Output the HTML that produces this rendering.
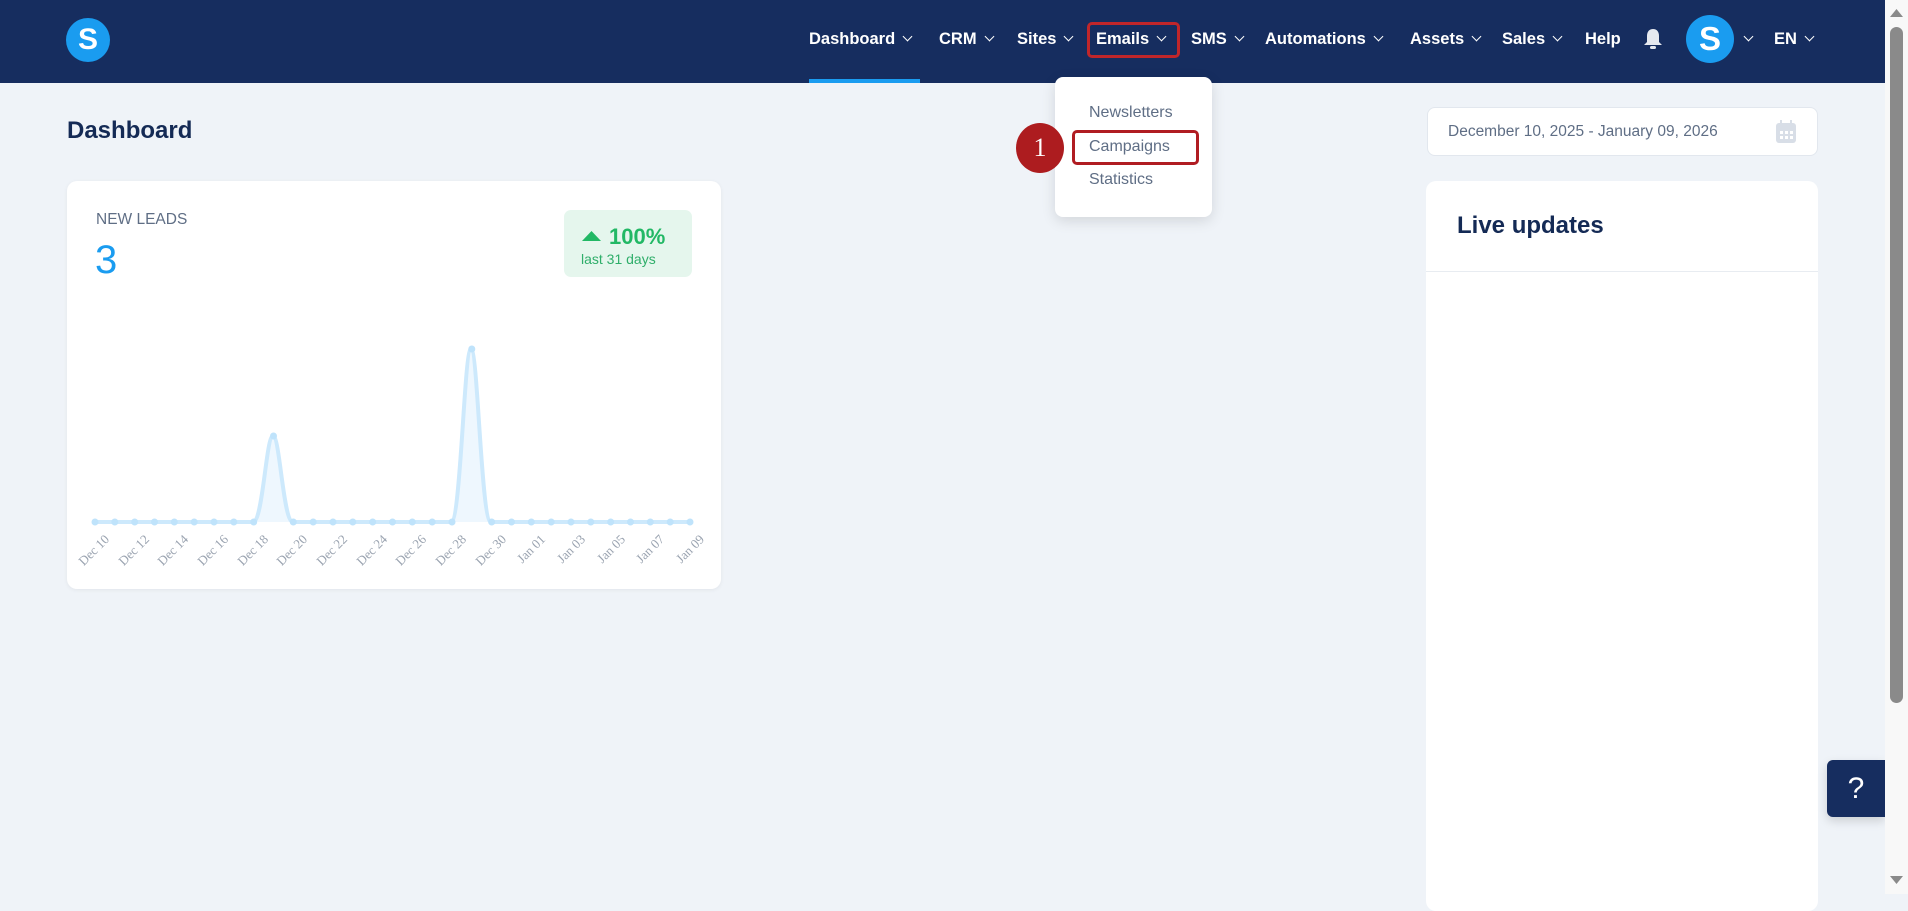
<!DOCTYPE html>
<html><head><meta charset="utf-8">
<style>
*{margin:0;padding:0;box-sizing:border-box}
body{width:1908px;height:894px;overflow:hidden;background:#eff3f8;font-family:"Liberation Sans",sans-serif;position:relative}
.hdr{position:absolute;left:0;top:0;width:1885px;height:83px;background:#162d5f}
.nav{position:absolute;top:30px;color:#fff;font-weight:bold;font-size:16.5px;white-space:nowrap}
.chev{display:inline-block;width:7px;height:7px;border-right:1.5px solid #fff;border-bottom:1.5px solid #fff;transform:rotate(45deg);margin-left:9px;position:relative;top:-4px}
.abs{position:absolute}
</style></head><body>
<div class="hdr"></div>
<div class="abs" style="left:66px;top:18px;width:44px;height:44px;border-radius:50%;background:#1a9cf0;color:#fff;font-weight:bold;font-size:30px;text-align:center;line-height:44px">S</div>
<div class="nav" style="left:809px">Dashboard<span class="chev"></span></div>
<div class="abs" style="left:809px;top:79px;width:111px;height:4px;background:#1a9cf0"></div>
<div class="nav" style="left:939px">CRM<span class="chev"></span></div>
<div class="nav" style="left:1017px">Sites<span class="chev"></span></div>
<div class="nav" style="left:1096px">Emails<span class="chev"></span></div>
<div class="abs" style="left:1087px;top:22px;width:93px;height:36px;border:3px solid #c0262a;border-radius:5px"></div>
<div class="nav" style="left:1191px">SMS<span class="chev"></span></div>
<div class="nav" style="left:1265px">Automations<span class="chev"></span></div>
<div class="nav" style="left:1410px">Assets<span class="chev"></span></div>
<div class="nav" style="left:1502px">Sales<span class="chev"></span></div>
<div class="nav" style="left:1585px">Help</div>
<svg class="abs" style="left:1642px;top:28px" width="22" height="23" viewBox="0 0 22 23"><path d="M11 1c-4 0-6 3-6 7v6l-3 3h18l-3-3V8c0-4-2-7-6-7z" fill="#e6e9ef"/><rect x="8" y="18" width="6" height="3" rx="1.5" fill="#e6e9ef"/></svg>
<div class="abs" style="left:1686px;top:15px;width:48px;height:48px;border-radius:50%;background:#1a9cf0;color:#fff;font-weight:bold;font-size:33px;text-align:center;line-height:48px">S</div>
<div class="nav" style="left:1745px"><span class="chev" style="margin-left:0"></span></div>
<div class="nav" style="left:1774px">EN<span class="chev"></span></div>

<div class="abs" style="left:67px;top:117px;font-size:24px;font-weight:bold;color:#142a55">Dashboard</div>

<div class="abs" style="left:67px;top:181px;width:654px;height:408px;background:#fff;border-radius:10px;box-shadow:0 1px 4px rgba(0,0,0,.06)"></div>
<div class="abs" style="left:96px;top:211px;font-size:15.5px;color:#5f6e85">NEW LEADS</div>
<div class="abs" style="left:95px;top:238px;font-size:40px;color:#1a9cf0">3</div>
<div class="abs" style="left:564px;top:210px;width:128px;height:67px;background:#e5f6ed;border-radius:7px"></div>
<svg class="abs" style="left:582px;top:231px" width="19" height="10"><polygon points="0,10 9.5,0 19,10" fill="#22b865"/></svg>
<div class="abs" style="left:609px;top:224px;font-size:22px;font-weight:bold;color:#22b865">100%</div>
<div class="abs" style="left:581px;top:251px;font-size:14px;color:#2fae6a">last 31 days</div>

<svg class="abs" style="left:67px;top:181px" width="654" height="408">
<g transform="translate(-67,-181)">
<path d="M95,522 L253,522 C263,522 266,436 273,436 C280,436 283,522 293,522 L451,522 C461,522 464,349 471,349 C478,349 481,522 491,522 L690,522 Z" fill="#eef7fe"/>
<path d="M95,522 L253,522 C263,522 266,436 273,436 C280,436 283,522 293,522 L451,522 C461,522 464,349 471,349 C478,349 481,522 491,522 L690,522" fill="none" stroke="#cde9fc" stroke-width="4"/>
<g fill="#bfe3fb">
<circle cx="95" cy="522" r="3.5"/><circle cx="114.8" cy="522" r="3.5"/><circle cx="134.7" cy="522" r="3.5"/><circle cx="154.5" cy="522" r="3.5"/><circle cx="174.3" cy="522" r="3.5"/><circle cx="194.2" cy="522" r="3.5"/><circle cx="214" cy="522" r="3.5"/><circle cx="233.8" cy="522" r="3.5"/><circle cx="253.7" cy="522" r="3.5"/><circle cx="273.5" cy="436" r="3.5"/><circle cx="293.3" cy="522" r="3.5"/><circle cx="313.2" cy="522" r="3.5"/><circle cx="333" cy="522" r="3.5"/><circle cx="352.8" cy="522" r="3.5"/><circle cx="372.7" cy="522" r="3.5"/><circle cx="392.5" cy="522" r="3.5"/><circle cx="412.3" cy="522" r="3.5"/><circle cx="432.2" cy="522" r="3.5"/><circle cx="452" cy="522" r="3.5"/><circle cx="471.8" cy="349" r="3.5"/><circle cx="491.7" cy="522" r="3.5"/><circle cx="511.5" cy="522" r="3.5"/><circle cx="531.3" cy="522" r="3.5"/><circle cx="551.2" cy="522" r="3.5"/><circle cx="571" cy="522" r="3.5"/><circle cx="590.8" cy="522" r="3.5"/><circle cx="610.7" cy="522" r="3.5"/><circle cx="630.5" cy="522" r="3.5"/><circle cx="650.3" cy="522" r="3.5"/><circle cx="670.2" cy="522" r="3.5"/><circle cx="690" cy="522" r="3.5"/>
</g>
<g font-family="Liberation Serif,serif" font-size="13" fill="#9aa3b0" text-anchor="end">
<text transform="translate(110,540) rotate(-45)">Dec 10</text>
<text transform="translate(150,540) rotate(-45)">Dec 12</text>
<text transform="translate(189,540) rotate(-45)">Dec 14</text>
<text transform="translate(229,540) rotate(-45)">Dec 16</text>
<text transform="translate(269,540) rotate(-45)">Dec 18</text>
<text transform="translate(308,540) rotate(-45)">Dec 20</text>
<text transform="translate(348,540) rotate(-45)">Dec 22</text>
<text transform="translate(388,540) rotate(-45)">Dec 24</text>
<text transform="translate(427,540) rotate(-45)">Dec 26</text>
<text transform="translate(467,540) rotate(-45)">Dec 28</text>
<text transform="translate(507,540) rotate(-45)">Dec 30</text>
<text transform="translate(546,540) rotate(-45)">Jan 01</text>
<text transform="translate(586,540) rotate(-45)">Jan 03</text>
<text transform="translate(626,540) rotate(-45)">Jan 05</text>
<text transform="translate(665,540) rotate(-45)">Jan 07</text>
<text transform="translate(705,540) rotate(-45)">Jan 09</text>
</g></g></svg>

<div class="abs" style="left:1427px;top:107px;width:391px;height:49px;background:#fff;border:1px solid #e2e7ee;border-radius:8px"></div>
<div class="abs" style="left:1448px;top:123px;font-size:15.5px;color:#5f6e85">December 10, 2025 - January 09, 2026</div>
<svg class="abs" style="left:1775px;top:120px" width="22" height="24"><rect x="1" y="3" width="20" height="20" rx="3" fill="#d8dee7"/><rect x="5" y="0" width="2" height="5" fill="#d8dee7"/><rect x="15" y="0" width="2" height="5" fill="#d8dee7"/><g fill="#fff"><rect x="5" y="11" width="3" height="3"/><rect x="10" y="11" width="3" height="3"/><rect x="15" y="11" width="3" height="3"/><rect x="5" y="16" width="3" height="3"/><rect x="10" y="16" width="3" height="3"/><rect x="15" y="16" width="3" height="3"/></g></svg>

<div class="abs" style="left:1426px;top:181px;width:392px;height:730px;background:#fff;border-radius:10px"></div>
<div class="abs" style="left:1426px;top:271px;width:392px;height:1px;background:#e8ecf1"></div>
<div class="abs" style="left:1457px;top:212px;font-size:24px;font-weight:bold;color:#142a55">Live updates</div>

<div class="abs" style="left:1055px;top:77px;width:157px;height:140px;background:#fff;border-radius:8px;box-shadow:0 4px 14px rgba(0,0,0,.12)"></div>
<div class="abs" style="left:1089px;top:104px;font-size:16px;color:#5f6e85">Newsletters</div>
<div class="abs" style="left:1089px;top:138px;font-size:16px;color:#5f6e85">Campaigns</div>
<div class="abs" style="left:1089px;top:171px;font-size:16px;color:#5f6e85">Statistics</div>
<div class="abs" style="left:1072px;top:130px;width:127px;height:35px;border:3px solid #b01c22;border-radius:5px"></div>
<div class="abs" style="left:1016px;top:123px;width:48px;height:50px;border-radius:50%;background:#ad1c1f;color:#fff;font-family:'Liberation Serif',serif;font-size:26px;text-align:center;line-height:50px">1</div>

<div class="abs" style="left:1827px;top:760px;width:58px;height:57px;background:#162d5f;border-radius:6px 0 0 6px;color:#fff;font-size:30px;text-align:center;line-height:57px;box-shadow:0 4px 10px rgba(0,0,0,.15)">?</div>

<div class="abs" style="left:1885px;top:0;width:23px;height:894px;background:#f8f8f8"></div>
<div class="abs" style="left:1890px;top:27px;width:13px;height:676px;background:#8a8a8a;border-radius:7px"></div>
<svg class="abs" style="left:1890px;top:9px" width="13" height="8"><polygon points="0,8 6.5,0 13,8" fill="#8a8a8a"/></svg>
<svg class="abs" style="left:1890px;top:876px" width="13" height="8"><polygon points="0,0 6.5,8 13,0" fill="#8a8a8a"/></svg>
</body></html>
